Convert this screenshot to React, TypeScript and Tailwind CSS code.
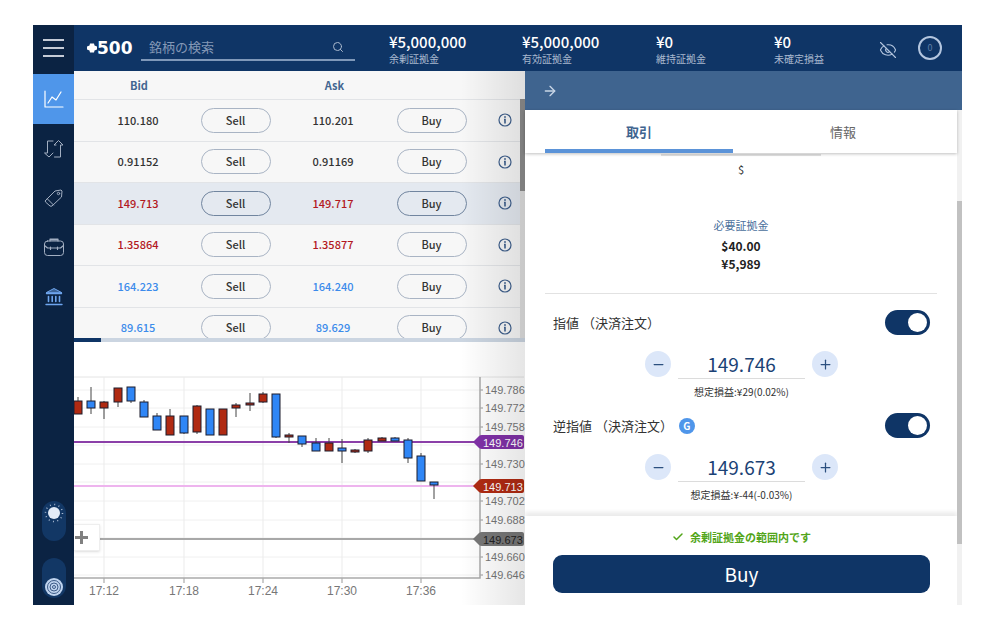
import { useState } from "react";
import { ArrowRight, Check, EyeOff, Minus, Plus, Search } from "lucide-react";
import { clsx } from "clsx";

const stats = [
  { value: "¥5,000,000", label: "余剰証拠金" },
  { value: "¥5,000,000", label: "有効証拠金" },
  { value: "¥0", label: "維持証拠金" },
  { value: "¥0", label: "未確定損益" },
];

const quotes = [
  { bid: "110.180", ask: "110.201", color: "text-[#333]" },
  { bid: "0.91152", ask: "0.91169", color: "text-[#333]" },
  { bid: "149.713", ask: "149.717", color: "text-[#b3191f]", active: true },
  { bid: "1.35864", ask: "1.35877", color: "text-[#b3191f]" },
  { bid: "164.223", ask: "164.240", color: "text-[#3b8beb]" },
  { bid: "89.615", ask: "89.629", color: "text-[#3b8beb]" },
];

const RED = "#b02a12";
const BLUE = "#2f86f6";

// center x, body top, body bottom, wick top, wick bottom, fill
const candles: [number, number, number, number, number, string][] = [
  [4, 59, 72, 55, 72, RED],
  [17, 59, 66, 45, 72, BLUE],
  [30, 60, 66, 59, 77, RED],
  [44, 46, 60, 46, 65, RED],
  [57, 45, 59, 45, 61, BLUE],
  [70, 60, 75, 58, 75, BLUE],
  [83, 74, 88, 71, 88, BLUE],
  [96, 74, 93, 67, 93, RED],
  [110, 74, 91, 74, 92, BLUE],
  [123, 64, 90, 63, 92, RED],
  [136, 67, 93, 67, 93, BLUE],
  [149, 67, 93, 67, 93, RED],
  [162, 63, 66, 61, 75, RED],
  [176, 61, 63, 51, 69, RED],
  [189, 52, 60, 50, 61, RED],
  [202, 52, 95, 52, 96, BLUE],
  [215, 93, 95, 91, 101, RED],
  [228, 94, 102, 94, 105, BLUE],
  [242, 101, 109, 96, 109, BLUE],
  [255, 101, 109, 96, 109, RED],
  [268, 106, 109, 97, 121, BLUE],
  [281, 108, 110, 107, 111, RED],
  [294, 98, 109, 96, 111, RED],
  [308, 96, 99, 95, 99, RED],
  [321, 96, 99, 95, 99, BLUE],
  [334, 98, 116, 96, 121, BLUE],
  [347, 114, 139, 111, 139, BLUE],
  [360, 140, 143, 140, 157, BLUE],
];

const priceTicks = [
  { y: 48, label: "149.786" },
  { y: 66, label: "149.772" },
  { y: 85, label: "149.758" },
  { y: 103 },
  { y: 122, label: "149.730" },
  { y: 140 },
  { y: 159, label: "149.702" },
  { y: 178, label: "149.688" },
  { y: 196 },
  { y: 215, label: "149.660" },
  { y: 233, label: "149.646" },
];

const timeTicks = [
  { x: 30, label: "17:12" },
  { x: 110, label: "17:18" },
  { x: 189, label: "17:24" },
  { x: 268, label: "17:30" },
  { x: 347, label: "17:36" },
];

const priceTags = [
  { y: 100, label: "149.746", line: "#8b3fa8", fill: "#8031a7", text: "#fff" },
  { y: 144, label: "149.713", line: "#eeb4ee", fill: "#b02a12", text: "#fff" },
  { y: 197, label: "149.673", line: "#a8a8a8", fill: "#777", text: "#222" },
];

function SideIcon({ name }: { name: string }) {
  return (
    <svg width="22" height="22" viewBox="0 0 22 22" fill="none" stroke="currentColor" strokeLinecap="round" strokeLinejoin="round">
      {name === "trade" && <path d="M2 3v16h18M5 15l4-6 4 3 5-8" strokeWidth="1.200" />}
      {name === "orders" && (
        <path d="M10 3H4.500v12H1.500l4.500 4 4-4M11.500 19h6V7h2.500L15.500 2.500 11 7h2" />
      )}
      {name === "tag" && (
        <>
          <path d="M2.500 13.500 12 4l6-1 1 1-.500 6-9.500 9q-1 .500-2 0l-4.500-4q-.500-1 0-1.500zM4.500 12l6 6" />
          <circle cx="15.500" cy="6.500" r="1.200" />
        </>
      )}
      {name === "briefcase" && (
        <>
          <rect x="1.500" y="5" width="19" height="14.500" rx="3" />
          <path d="M7 5V3h8v2M7 4h8M1.500 9.500l3 2.500h13l3-2.500M7.500 11v2.500M14.500 11v2.500" strokeWidth="1.200" />
        </>
      )}
      {name === "bank" && (
        <>
          <path d="M3.500 7.500 11 3.500l7.500 4z" fill="currentColor" fillOpacity="0.500" />
          <path d="M3.500 8.500h15M3 19.500h16" strokeWidth="1.400" />
          <path d="M5.500 11.500v5M9.200 11.500v5M12.800 11.500v5M16.500 11.500v5" strokeWidth="1.600" />
        </>
      )}
    </svg>
  );
}

function Sidebar() {
  return (
    <aside className="flex w-[41px] shrink-0 flex-col bg-[#0b2343]">
      <button aria-label="メニュー" className="flex h-[49px] flex-col items-center justify-center gap-[6px] pb-1">
        <span className="h-[2px] w-[21px] bg-[#c5cbd6]" />
        <span className="h-[2px] w-[21px] bg-[#c5cbd6]" />
        <span className="h-[2px] w-[21px] bg-[#c5cbd6]" />
      </button>
      <nav className="flex flex-col text-[#a3afc2]">
        <a href="#trade" aria-label="取引" className="flex h-[50px] items-center justify-center bg-[#4f96ea] text-white">
          <SideIcon name="trade" />
        </a>
        <a href="#orders" aria-label="注文" className="flex h-[49px] items-center justify-center">
          <SideIcon name="orders" />
        </a>
        <a href="#tag" aria-label="ポジション" className="flex h-[49px] items-center justify-center">
          <SideIcon name="tag" />
        </a>
        <a href="#briefcase" aria-label="口座" className="flex h-[49px] items-center justify-center">
          <SideIcon name="briefcase" />
        </a>
        <a href="#bank" aria-label="入出金" className="flex h-[49px] items-center justify-center text-[#6ea5ee]">
          <SideIcon name="bank" />
        </a>
      </nav>
      <div className="mt-auto flex flex-col items-center gap-[17px] pb-[7px]">
        <button aria-label="テーマ" className="flex h-10 w-6 items-start justify-center rounded-full bg-[#123765] pt-[2px]">
          <svg width="20" height="20" viewBox="0 0 20 20">
            <circle cx="10" cy="10" r="6" fill="#e2ebf7" />
            <circle cx="10" cy="10" r="8.500" fill="none" stroke="#a9bad2" strokeWidth="1.500" strokeDasharray="1 3.450" />
          </svg>
        </button>
        <button aria-label="表示モード" className="flex h-10 w-6 items-end justify-center rounded-full bg-[#123765] pb-[1px]">
          <svg width="20" height="20" viewBox="0 0 20 20" fill="none">
            <circle cx="10" cy="10" r="9" fill="#bfd3ee" />
            <circle cx="10" cy="10" r="6.500" stroke="#3d5c88" />
            <circle cx="10" cy="10" r="4" stroke="#3d5c88" />
            <circle cx="10" cy="10" r="1.500" stroke="#3d5c88" />
          </svg>
        </button>
      </div>
    </aside>
  );
}

function Header() {
  return (
    <header className="flex h-[46px] items-center bg-[#0f3566] pl-[13px] pr-5 text-white">
      <a href="#home" className="flex w-[54px] shrink-0 items-center">
        <svg width="10" height="10" viewBox="0 0 10 10" fill="#fff">
          <path d="M3 0.500h4l.500 2 2.500 1v3l-2.500 1-.500 2H3l-.500-2L0 6.500v-3l2.500-1z" />
        </svg>
        <span className="font-['DejaVu_Sans',sans-serif] text-[17px] font-bold leading-5">500</span>
      </a>
      <label className="flex h-[26px] w-[214px] shrink-0 items-center border-b-2 border-[#7f98b9] pl-2 pr-[11px]">
        <input
          aria-label="銘柄の検索"
          placeholder="銘柄の検索"
          className="min-w-0 flex-1 bg-transparent text-[13px] leading-5 outline-none placeholder:text-[#8498b6]"
        />
        <Search size={12} className="text-[#a9b8cd]" />
      </label>
      <dl className="ml-[34px] mt-[2px] grid flex-1 grid-cols-[133fr_134fr_118fr_105fr]">
        {stats.map((s) => (
          <div key={s.label} className="flex flex-col-reverse">
            <dt className="whitespace-nowrap text-[10px] leading-[14px] text-[#a9b9cf]">{s.label}</dt>
            <dd className="text-[15px] font-medium leading-5">{s.value}</dd>
          </div>
        ))}
      </dl>
      <button aria-label="残高を隠す" className="mr-[21px] text-[#b4c6df]">
        <EyeOff size={18} strokeWidth={1.500} className="mt-1" />
      </button>
      <button className="h-6 w-6 rounded-full border-2 border-[#b4c6df] text-[9px] leading-5 text-[#5f7fa8]">0</button>
    </header>
  );
}

function InfoIcon() {
  return (
    <svg width="14" height="14" viewBox="0 0 14 14" fill="none" stroke="currentColor">
      <circle cx="7" cy="7" r="6" strokeWidth="1.200" />
      <path d="M7 3.200v1.600" strokeWidth="1.800" />
      <path d="M6 6.500h1v4" strokeWidth="1.600" />
    </svg>
  );
}

function QuoteButton({ label, active }: { label: string; active?: boolean }) {
  return (
    <button
      className={clsx(
        "h-[25px] w-[70px] rounded-full border text-[11px] font-medium leading-none text-[#333]",
        active ? "border-[#71859f]" : "border-[#a9b4c4]"
      )}
    >
      {label}
    </button>
  );
}

function QuoteTable() {
  return (
    <div className="bg-[#f7f7f7]">
      <div className="flex h-[267px] overflow-hidden">
        <table className="flex-1 table-fixed border-collapse self-start text-center text-[11px]">
          <colgroup>
            <col className="w-[112px]" />
            <col className="w-[99px]" />
            <col className="w-[96px]" />
            <col className="w-[101px]" />
            <col className="w-[38px]" />
          </colgroup>
          <thead>
            <tr className="h-7 border-b border-[#e2e4e7] text-[#426691]">
              <th className="pl-[18px] font-bold">Bid</th>
              <td />
              <th className="pl-[3px] font-bold">Ask</th>
              <td />
              <td />
            </tr>
          </thead>
          <tbody>
            {quotes.map((q) => (
              <tr
                key={q.bid}
                className={clsx("border-b border-[#e2e4e7] odd:h-[42px] even:h-[41px]", q.active && "bg-[#e4e9f0]")}
              >
                <td className={clsx("pl-4 font-medium", q.color)}>{q.bid}</td>
                <td>
                  <QuoteButton label="Sell" active={q.active} />
                </td>
                <td className={clsx("font-medium", q.color)}>{q.ask}</td>
                <td>
                  <QuoteButton label="Buy" active={q.active} />
                </td>
                <td className="pl-2">
                  <button aria-label="詳細" className="flex w-full justify-center text-[#3e5f8c]">
                    <InfoIcon />
                  </button>
                </td>
              </tr>
            ))}
          </tbody>
        </table>
        <div className="mt-7 w-[5px] bg-[#dedede]">
          <div className="h-[92px] bg-[#8c8c8c]" />
        </div>
      </div>
      <div className="h-1 bg-[#cbd5e1]">
        <div className="h-1 w-[27px] bg-[#0f3566]" />
      </div>
    </div>
  );
}

function Chart() {
  return (
    <div className="relative flex-1 bg-white">
      <svg viewBox="0 0 451 263" className="w-full font-['Liberation_Sans',Arial,sans-serif]">
        <path d="M0 35H450" stroke="#e4e4e4" />
        {priceTicks.map((t) => (
          <g key={t.y}>
            <path d={`M0 ${t.y}H406`} stroke="#f0f0f0" />
            <path d={`M406 ${t.y}H409`} stroke="#999" />
            {t.label && (
              <text x="411" y={t.y + 4} fontSize="11" fill="#777">
                {t.label}
              </text>
            )}
          </g>
        ))}
        {timeTicks.map((t) => (
          <g key={t.x}>
            <path d={`M${t.x} 35V236`} stroke="#ebebeb" />
            <path d={`M${t.x} 236V241`} stroke="#999" />
            <text x={t.x} y="253" fontSize="12" fill="#777" textAnchor="middle">
              {t.label}
            </text>
          </g>
        ))}
        <path d="M0 236H406V35" fill="none" stroke="#aaa" strokeWidth="1.500" />
        {priceTags.map((t) => (
          <path key={t.label} d={`M0 ${t.y}H402`} stroke={t.line} strokeWidth="2" />
        ))}
        {candles.map(([x, top, bottom, high, low, fill]) => (
          <g key={x}>
            <path d={`M${x} ${high}V${low}`} stroke="#444" />
            <rect x={x - 4} y={top} width="8" height={bottom - top} fill={fill} stroke="#1c1c2c" />
          </g>
        ))}
        {priceTags.map((t) => (
          <g key={t.label}>
            <path
              d={`M399 ${t.y}l6-6q1-1 3-1h40q2 0 2 2v10q0 2-2 2h-40q-2 0-3-1z`}
              fill={t.fill}
            />
            <text x="409" y={t.y + 5} fontSize="11" fill={t.text}>
              {t.label}
            </text>
          </g>
        ))}
      </svg>
      <button
        aria-label="ツール"
        className="absolute left-0 top-[182px] flex h-[27px] w-[26px] items-center border border-l-0 border-[#eee] bg-white text-[#808080] shadow-sm"
      >
        <svg width="15" height="15" viewBox="0 0 15 15" stroke="currentColor" strokeWidth="3">
          <path d="M1 7.500h13M7.500 1v13" />
        </svg>
      </button>
    </div>
  );
}

function OrderSwitch({ id }: { id: string }) {
  return (
    <input
      id={id}
      type="checkbox"
      defaultChecked
      className="flex h-[25px] w-[45px] shrink-0 appearance-none items-center rounded-full bg-[#b9c0ca] px-[3px] before:h-[19px] before:w-[19px] before:rounded-full before:bg-white before:content-[''] checked:justify-end checked:bg-[#0f3566]"
    />
  );
}

interface OrderRowProps {
  id: string;
  label: string;
  initial: string;
  note: string;
  guaranteed?: boolean;
}

function OrderRow({ id, label, initial, note, guaranteed }: OrderRowProps) {
  const [price, setPrice] = useState(initial);
  const step = (d: number) => setPrice((Number(price) + d).toFixed(3));

  return (
    <div className="h-[103px] pl-2 pr-[7px]">
      <div className="flex h-[25px] items-center">
        <label htmlFor={id} className="text-[13px] leading-5 text-[#333]">
          {label}
        </label>
        {guaranteed && (
          <span className="ml-[6px] flex h-4 w-4 items-center justify-center rounded-full bg-[#4f96ea] text-[10px] font-bold leading-none text-white">
            G
          </span>
        )}
        <span className="flex-1" />
        <OrderSwitch id={id} />
      </div>
      <div className="mt-[14px] flex items-center justify-center gap-[7px]">
        <button
          aria-label="減らす"
          onClick={() => step(-0.001)}
          className="flex h-[26px] w-[26px] items-center justify-center rounded-full bg-[#dce7f9] text-[#2b4f7f]"
        >
          <Minus size={15} strokeWidth={2} />
        </button>
        <input
          aria-label={label}
          value={price}
          onChange={(e) => setPrice(e.target.value)}
          className="h-[30px] w-[127px] border-b border-[#dcdcdc] text-center text-[19px] leading-7 text-[#1b4275] outline-none"
        />
        <button
          aria-label="増やす"
          onClick={() => step(0.001)}
          className="flex h-[26px] w-[26px] items-center justify-center rounded-full bg-[#dce7f9] text-[#2b4f7f]"
        >
          <Plus size={15} strokeWidth={2} />
        </button>
      </div>
      <p className="mt-[6px] text-center text-[10px] leading-[14px] text-[#333]">{note}</p>
    </div>
  );
}

function OrderPanel() {
  return (
    <section className="flex flex-col bg-white">
      <div className="flex h-[39px] items-center bg-[#3f648f] pl-[17px]">
        <button aria-label="閉じる" className="text-[#c9d6e6]">
          <ArrowRight size={16} strokeWidth={2} />
        </button>
      </div>
      <div className="flex flex-1">
        <div className="flex flex-1 flex-col">
          <div role="tablist" className="z-10 grid h-[43px] grid-cols-[188fr_220fr] bg-white pl-5 pr-1 text-[13px] shadow-[0_1px_3px_rgba(0,0,0,0.25)]">
            <button role="tab" aria-selected className="border-b-4 border-[#5b93d8] pt-1 font-bold text-[#3f648f]">
              取引
            </button>
            <button role="tab" aria-selected={false} className="text-[#666]">
              情報
            </button>
          </div>

          <div className="h-[363px] overflow-hidden pl-5 pr-5 text-center">
            <div className="mx-auto mt-[1px] h-[2px] w-[160px] bg-[#e2e2e2]" />
            <p className="mt-[5px] text-[11px] leading-4 text-[#333]">$</p>
            <p className="mt-10 text-[11px] leading-4 text-[#4a6f9c]">必要証拠金</p>
            <p className="mt-1 text-[12px] font-bold leading-[18px] text-[#222]">
              $40.00
              <br />
              ¥5,989
            </p>
            <hr className="mb-4 mt-5 border-[#e2e2e2]" />
            <OrderRow id="limit" label="指値 （決済注文）" initial="149.746" note="想定損益:¥29(0.02%)" />
            <OrderRow id="stop" label="逆指値 （決済注文）" initial="149.673" note="想定損益:¥-44(-0.03%)" guaranteed />
          </div>

          <footer className="flex flex-1 flex-col bg-white pl-7 pr-[27px] shadow-[0_-4px_4px_rgba(0,0,0,0.08)]">
            <p className="mt-[11px] flex items-center justify-center gap-[6px] text-[11px] font-bold leading-5 text-[#52a519]">
              <Check size={12} strokeWidth={3} />
              余剰証拠金の範囲内です
            </p>
            <button className="mb-3 mt-2 h-[38px] rounded-[9px] bg-[#0f3566] text-[19px] leading-6 text-white">Buy</button>
          </footer>
        </div>
        <div className="w-[5px] bg-[#f1f1f1] pt-[91px]">
          <div className="h-[343px] bg-[#c1c1c1]" />
        </div>
      </div>
    </section>
  );
}

export default function App() {
  return (
    <div className="bg-white pb-9 pl-[33px] pr-[38px] pt-[25px] font-['Noto_Sans_CJK_JP',sans-serif]">
      <div className="flex">
        <Sidebar />
        <div className="min-w-0 flex-1">
          <Header />
          <main className="grid grid-cols-[451fr_437fr]">
            <div className="relative flex flex-col">
              <QuoteTable />
              <Chart />
              <div className="pointer-events-none absolute inset-y-0 right-0 w-16 bg-gradient-to-r from-transparent to-black/10" />
            </div>
            <OrderPanel />
          </main>
        </div>
      </div>
    </div>
  );
}
